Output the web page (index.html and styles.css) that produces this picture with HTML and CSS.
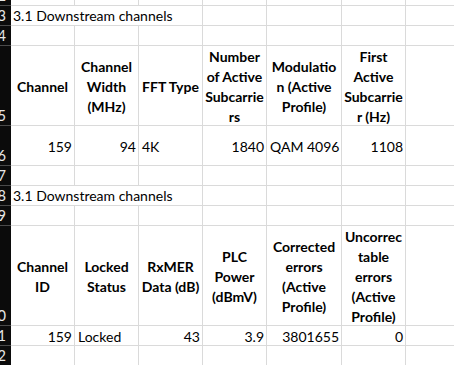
FILE: index.html
```html
<!DOCTYPE html>
<html>
<head>
<meta charset="utf-8">
<link rel="stylesheet" href="styles.css">
</head>
<body>
<div class="sheet">
  <!-- row 2 -->
  <div class="rh">2</div><div class="c"></div><div class="c"></div><div class="c"></div><div class="c"></div><div class="c"></div><div class="c"></div><div class="c"></div>
  <!-- row 3 -->
  <div class="rh">3</div><div class="c title">3.1 Downstream channels</div><div class="c"></div><div class="c"></div><div class="c"></div><div class="c"></div>
  <!-- row 4 -->
  <div class="rh">4</div><div class="c"></div><div class="c"></div><div class="c"></div><div class="c"></div><div class="c"></div><div class="c"></div><div class="c"></div>
  <!-- row 5 -->
  <div class="rh">5</div>
  <div class="c h"><span>Channel</span></div>
  <div class="c h"><span>Channel<br>Width<br>(MHz)</span></div>
  <div class="c h"><span>FFT Type</span></div>
  <div class="c h"><span>Number<br>of Active<br>Subcarrie<br>rs</span></div>
  <div class="c h"><span>Modulatio<br>n (Active<br>Profile)</span></div>
  <div class="c h"><span>First<br>Active<br>Subcarrie<br>r (Hz)</span></div>
  <div class="c"></div>
  <!-- row 6 -->
  <div class="rh">6</div>
  <div class="c n">159</div>
  <div class="c n">94</div>
  <div class="c t">4K</div>
  <div class="c n">1840</div>
  <div class="c t">QAM 4096</div>
  <div class="c n">1108</div>
  <div class="c"></div>
  <!-- row 7 -->
  <div class="rh">7</div><div class="c"></div><div class="c"></div><div class="c"></div><div class="c"></div><div class="c"></div><div class="c"></div><div class="c"></div>
  <!-- row 8 -->
  <div class="rh">8</div><div class="c title">3.1 Downstream channels</div><div class="c"></div><div class="c"></div><div class="c"></div><div class="c"></div>
  <!-- row 9 -->
  <div class="rh">9</div><div class="c"></div><div class="c"></div><div class="c"></div><div class="c"></div><div class="c"></div><div class="c"></div><div class="c"></div>
  <!-- row 10 -->
  <div class="rh">10</div>
  <div class="c h"><span>Channel<br>ID</span></div>
  <div class="c h"><span>Locked<br>Status</span></div>
  <div class="c h"><span>RxMER<br>Data (dB)</span></div>
  <div class="c h"><span>PLC<br>Power<br>(dBmV)</span></div>
  <div class="c h"><span>Corrected<br>errors<br>(Active<br>Profile)</span></div>
  <div class="c h"><span>Uncorrec<br>table<br>errors<br>(Active<br>Profile)</span></div>
  <div class="c"></div>
  <!-- row 11 -->
  <div class="rh">11</div>
  <div class="c n">159</div>
  <div class="c t">Locked</div>
  <div class="c n">43</div>
  <div class="c n">3.9</div>
  <div class="c n">3801655</div>
  <div class="c n">0</div>
  <div class="c"></div>
  <!-- row 12 -->
  <div class="rh">12</div><div class="c"></div><div class="c"></div><div class="c"></div><div class="c"></div><div class="c"></div><div class="c"></div><div class="c"></div>
</div>
</body>
</html>
```
FILE: styles.css
```css
html, body {
  margin: 0;
  padding: 0;
  background: #ffffff;
  overflow: hidden;
}
.sheet {
  display: grid;
  grid-template-columns: 11px 64px 64px 64px 64px 75px 64px 64px;
  grid-template-rows: 6px 20px 20px 80px 40px 20px 20px 20px 100px 20px 20px;
  font-family: Lato, "Liberation Sans", sans-serif;
  font-size: 14px;
  line-height: 20px;
  color: #000;
}
.rh {
  box-sizing: border-box;
  background: #0b0b0b;
  color: #e6e6e6;
  border-bottom: 1px solid #4a4a4a;
  display: flex;
  align-items: flex-end;
  justify-content: flex-end;
  padding-right: 5px;
  overflow: hidden;
  white-space: nowrap;
  line-height: 19px;
  font-size: 14.67px;
}
.c {
  box-sizing: border-box;
  border-right: 1px solid #dadada;
  border-bottom: 1px solid #dadada;
  display: flex;
  align-items: center;
  white-space: nowrap;
  min-width: 0;
}
.title {
  grid-column: span 3;
  padding-left: 2px;
  overflow: visible;
}
.h {
  justify-content: center;
  text-align: center;
  font-weight: bold;
  overflow: visible;
}
.h span {
  display: block;
  padding-top: 2px;
}
.n {
  justify-content: flex-end;
  padding-right: 2px;
  padding-top: 2px;
}
.t {
  justify-content: flex-start;
  padding-left: 3px;
  padding-top: 2px;
}
```
